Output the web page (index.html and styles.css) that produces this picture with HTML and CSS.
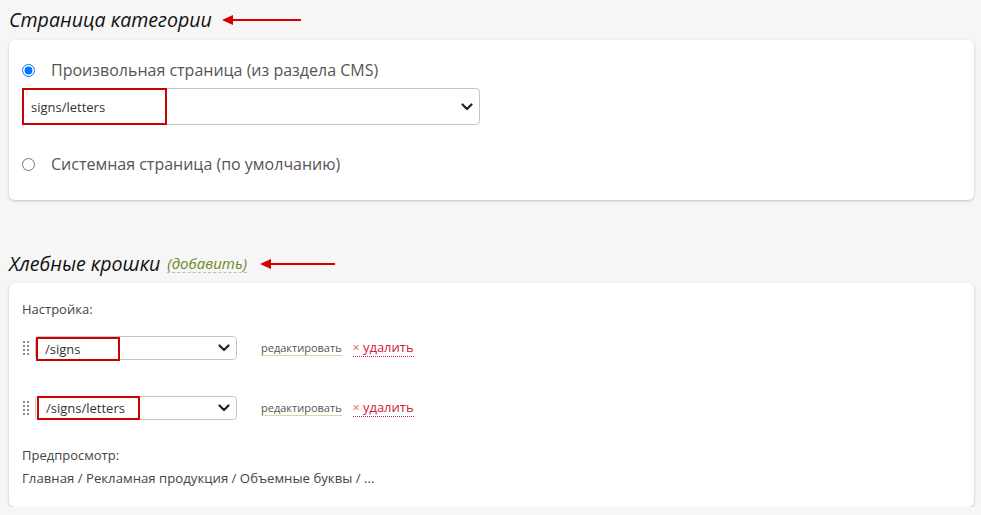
FILE: index.html
```html
<!DOCTYPE html>
<html lang="ru">
<head>
<meta charset="utf-8">
<link rel="stylesheet" href="styles.css">
</head>
<body>
<div class="page">
  <h2 class="title title-first">
    <span>Страница категории</span>
    <span class="arrow arrow-1"></span>
  </h2>
  <div class="card card-cat">
    <label class="radio-row">
      <input type="radio" name="page" checked>
      <span>Произвольная страница (из раздела CMS)</span>
    </label>
    <div class="select select-big">
      <span class="hl hl-big">signs/letters</span>
      <svg class="chev" width="12" height="8" viewBox="0 0 12 8"><path d="M1.5 1.5 L6 6 L10.5 1.5" fill="none" stroke="#222" stroke-width="2.2" stroke-linecap="round" stroke-linejoin="round"/></svg>
    </div>
    <label class="radio-row radio-row-2">
      <input type="radio" name="page">
      <span>Системная страница (по умолчанию)</span>
    </label>
  </div>

  <h2 class="title title-second">
    <span>Хлебные крошки</span>
    <a class="add">(добавить)</a>
    <span class="arrow arrow-2"></span>
  </h2>
  <div class="card card-crumbs">
    <div class="label">Настройка:</div>
    <div class="crumb-row">
      <svg class="handle" width="7" height="14" viewBox="0 0 7 14"><g fill="#8a8a8a"><rect x="0" y="0" width="2" height="2"/><rect x="4" y="0" width="2" height="2"/><rect x="0" y="4" width="2" height="2"/><rect x="4" y="4" width="2" height="2"/><rect x="0" y="8" width="2" height="2"/><rect x="4" y="8" width="2" height="2"/><rect x="0" y="12" width="2" height="2"/><rect x="4" y="12" width="2" height="2"/></g></svg>
      <div class="select select-small">
        <span class="hl hl-s1">/signs</span>
        <svg class="chev" width="12" height="8" viewBox="0 0 12 8"><path d="M1.5 1.5 L6 6 L10.5 1.5" fill="none" stroke="#222" stroke-width="2.2" stroke-linecap="round" stroke-linejoin="round"/></svg>
      </div>
      <a class="edit">редактировать</a>
      <a class="del"><span class="x">×</span> удалить</a>
    </div>
    <div class="crumb-row crumb-row-2">
      <svg class="handle" width="7" height="14" viewBox="0 0 7 14"><g fill="#8a8a8a"><rect x="0" y="0" width="2" height="2"/><rect x="4" y="0" width="2" height="2"/><rect x="0" y="4" width="2" height="2"/><rect x="4" y="4" width="2" height="2"/><rect x="0" y="8" width="2" height="2"/><rect x="4" y="8" width="2" height="2"/><rect x="0" y="12" width="2" height="2"/><rect x="4" y="12" width="2" height="2"/></g></svg>
      <div class="select select-small">
        <span class="hl hl-s2">/signs/letters</span>
        <svg class="chev" width="12" height="8" viewBox="0 0 12 8"><path d="M1.5 1.5 L6 6 L10.5 1.5" fill="none" stroke="#222" stroke-width="2.2" stroke-linecap="round" stroke-linejoin="round"/></svg>
      </div>
      <a class="edit">редактировать</a>
      <a class="del"><span class="x">×</span> удалить</a>
    </div>
    <div class="label label-preview">Предпросмотр:</div>
    <div class="preview">Главная / Рекламная продукция / Объемные буквы / ...</div>
  </div>
</div>
</body>
</html>
```

FILE: styles.css
```css
* { box-sizing: border-box; }
html, body {
  margin: 0;
  padding: 0;
  background: #f6f6f6;
}
body {
  font-family: "Open Sans", "Noto Sans", sans-serif;
  color: #444;
}
.page {
  padding: 8px 7px 0 9px;
}
.title {
  margin: 0;
  display: flex;
  align-items: center;
  height: 24px;
  font-size: 19.6px;
  line-height: 24px;
  font-weight: normal;
  font-style: italic;
  color: #111;
}
.title-first { margin-bottom: 8px; }
.title-second { margin-top: 52px; margin-bottom: 7px; }
.arrow {
  display: inline-block;
  position: relative;
  height: 2px;
  background: #d40000;
}
.arrow::before {
  content: "";
  position: absolute;
  left: -2px;
  top: -4px;
  border-right: 11px solid #d40000;
  border-top: 5px solid transparent;
  border-bottom: 5px solid transparent;
}
.arrow-1 { width: 77px; margin-left: 12px; }
.arrow-2 { width: 73px; margin-left: 15px; }
.add {
  margin-left: 7px;
  font-size: 15px;
  color: #6d8a22;
  font-style: italic;
  border-bottom: 1px dashed #bbb;
  line-height: 17px;
}
.card {
  background: #fff;
  border-radius: 6px;
  box-shadow: 0 1px 3px rgba(0, 0, 0, 0.22);
}
.card-cat {
  padding: 19px 13px 25px;
  height: 160px;
}
.radio-row {
  display: flex;
  align-items: center;
  height: 22px;
  font-size: 16px;
  color: #555;
}
.radio-row input {
  margin: 0 16px 0 0;
  width: 13px;
  height: 13px;
}
.radio-row-2 { margin-top: 28px; }
.select {
  display: flex;
  align-items: center;
  border: 1px solid #c6c6c6;
  border-radius: 4px;
  background: #fff;
  color: #333;
}
.select-big {
  margin-top: 7px;
  width: 458px;
  height: 37px;
  font-size: 13px;
}
.select-small {
  width: 202px;
  height: 24px;
  font-size: 13px;
}
.chev { margin-left: auto; margin-right: 6px; }
.hl {
  display: flex;
  align-items: center;
  align-self: stretch;
  margin: -1px 0 -1px -1px;
  border: 2px solid #cc0000;
  padding-left: 7px;
}
.hl-big { width: 145px; }
.hl-s1 { width: 84px; margin-top: 0; margin-bottom: -2px; margin-left: 0; }
.hl-s2 { width: 103px; margin-left: 1px; }
.card-crumbs {
  padding: 17px 13px 20px;
  height: 224px;
}
.label {
  font-size: 13px;
  line-height: 18px;
  color: #444;
}
.crumb-row {
  display: flex;
  align-items: center;
  margin-top: 18px;
  height: 24px;
}
.crumb-row-2 { margin-top: 36px; }
.handle { margin-left: 1px; margin-right: 5px; }
.edit {
  margin-left: 24px;
  font-size: 11px;
  color: #555;
  border-bottom: 1px solid #c8e09a;
  line-height: 14px;
}
.del {
  margin-left: 11px;
  font-size: 13px;
  color: #d0203a;
  border-bottom: 1px dotted #d0203a;
  line-height: 16px;
}
.del .x { color: #e06040; font-size: 12px; }
.label-preview { margin-top: 26px; }
.preview {
  margin-top: 5px;
  font-size: 13.2px;
  line-height: 18px;
  color: #444;
}
```
